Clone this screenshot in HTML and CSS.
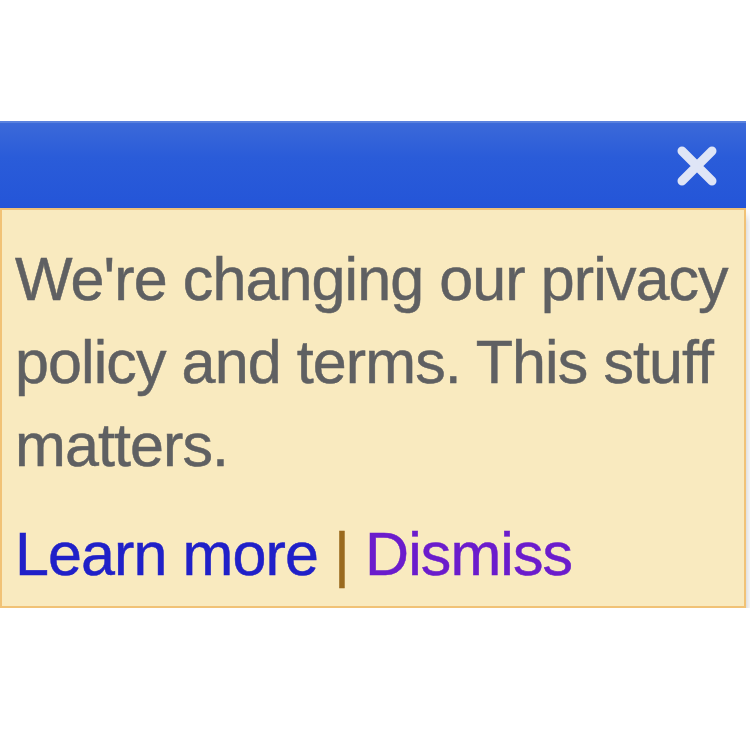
FILE: index.html
```html
<!DOCTYPE html>
<html>
<head>
<meta charset="utf-8">
<link rel="stylesheet" href="styles.css">
</head>
<body>
<div class="notice">
  <div class="bar">
    <svg class="close" width="42" height="42" viewBox="0 0 42 42">
      <path d="M6 6 L36 36 M36 6 L6 36" stroke="#dfe5f6" stroke-width="9" stroke-linecap="round"/>
    </svg>
  </div>
  <div class="body">
    <p class="msg">We're changing our privacy<br>policy and terms. This stuff<br>matters.</p>
    <div class="links"><a class="learn" href="#">Learn more</a> <span class="sep">|</span> <a class="dismiss" href="#">Dismiss</a></div>
  </div>
</div>
</body>
</html>
```
FILE: styles.css
```css
html, body {
  margin: 0;
  padding: 0;
  background: #ffffff;
}
.notice {
  width: 746px;
  margin-top: 121px;
  font-family: "Liberation Sans", Arial, sans-serif;
}
.bar {
  height: 87px;
  box-sizing: border-box;
  background: linear-gradient(#3b69d9, #2a5cd9 40%, #2455d8);
  border-top: 2px solid #5a82de;
  display: flex;
  justify-content: flex-end;
  align-items: center;
  padding-right: 28px;
}
.close {
  display: block;
}
.body {
  background: #f9eabf;
  border: 2px solid #f1c276;
  padding: 28px 0 10px 13px;
  box-shadow: 0 8px 8px rgba(0, 0, 0, 0.25);
}
.msg {
  margin: 0 0 26px 0;
  font-size: 61px;
  line-height: 83px;
  color: #5f6062;
  letter-spacing: -0.9px;
  white-space: nowrap;
  -webkit-text-stroke: 0.5px #5f6062;
}
.links {
  font-size: 61px;
  line-height: 83px;
  letter-spacing: -0.9px;
  white-space: nowrap;
}
.links a {
  text-decoration: none;
}
.learn {
  color: #2020c8;
  -webkit-text-stroke: 0.5px #2020c8;
}
.dismiss {
  color: #6b1ccc;
  -webkit-text-stroke: 0.5px #6b1ccc;
}
.sep {
  color: #9a6a1e;
  -webkit-text-stroke: 0.5px #9a6a1e;
}
```
